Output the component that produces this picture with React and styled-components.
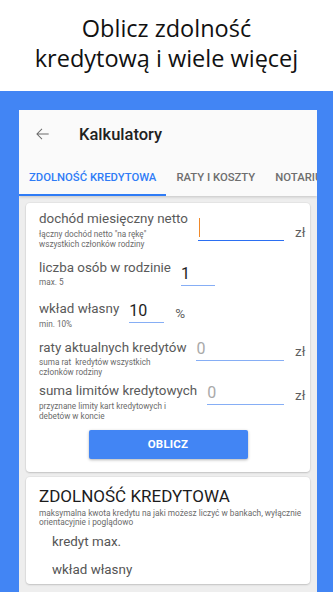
import React from 'react'
import styled, { createGlobalStyle } from 'styled-components'

const GlobalStyle = createGlobalStyle`
    html, body {
        margin: 0;
        padding: 0;
        background: #ffffff;
    }
    body {
        font-family: Roboto, "Liberation Sans", sans-serif;
    }
`

const rows = [
    {
        label: 'dochód miesięczny netto',
        hint: 'łączny dochód netto "na rękę" wszystkich członków rodziny',
        value: '',
        unit: 'zł',
        grow: true,
        focused: true,
        space: 0,
        drop: 7,
    },
    {
        label: 'liczba osób w rodzinie',
        hint: 'max. 5',
        value: '1',
        width: 34,
        space: 11,
        drop: 3,
    },
    {
        label: 'wkład własny',
        hint: 'min. 10%',
        value: '10',
        unit: '%',
        width: 35,
        space: 14,
        drop: -1.5,
    },
    {
        label: 'raty aktualnych kredytów',
        hint: 'suma rat\u00a0 kredytów wszystkich członków rodziny',
        placeholder: '0',
        unit: 'zł',
        grow: true,
        space: 11,
        drop: -2,
    },
    {
        label: 'suma limitów kredytowych',
        hint: 'przyznane limity kart kredytowych i debetów w koncie',
        placeholder: '0',
        unit: 'zł',
        grow: true,
        space: 6,
        drop: -1.5,
    },
]

function BackArrow() {
    return (
        <svg width="20" height="20" viewBox="0 0 24 24">
            <path
                fill="#6a6a6a"
                d="M20 11.3H7.3l5.1-5.1-.8-.8L5.1 12l6.5 6.6.8-.8-5.1-5.1H20z"
            />
        </svg>
    )
}

export default function App() {
    return (
        <Page>
            <GlobalStyle />
            <Headline>
                Oblicz zdolność
                <br />
                kredytową i wiele więcej
            </Headline>

            <Frame>
                <Screen>
                    <AppBar>
                        <Toolbar>
                            <IconButton>
                                <BackArrow />
                            </IconButton>
                            <Title>Kalkulatory</Title>
                        </Toolbar>
                        <Tabs>
                            <Tab $active>ZDOLNOŚĆ KREDYTOWA</Tab>
                            <Tab>RATY I KOSZTY</Tab>
                            <Tab>NOTARIUSZ</Tab>
                        </Tabs>
                    </AppBar>

                    <Content>
                        <Card>
                            {rows.map((row) => (
                                <Row key={row.label} $space={row.space}>
                                    <LabelBlock>
                                        <Label>{row.label}</Label>
                                        <Hint>{row.hint}</Hint>
                                    </LabelBlock>
                                    <FieldWrap $grow={row.grow} $drop={row.drop}>
                                        <Field
                                            $grow={row.grow}
                                            $width={row.width}
                                            $focused={row.focused}
                                        >
                                            {row.focused && <Caret />}
                                            {row.value ? (
                                                <Value>{row.value}</Value>
                                            ) : (
                                                <Placeholder>{row.placeholder}</Placeholder>
                                            )}
                                        </Field>
                                        {row.unit && <Unit>{row.unit}</Unit>}
                                    </FieldWrap>
                                </Row>
                            ))}
                            <Submit>OBLICZ</Submit>
                        </Card>

                        <Card $result>
                            <ResultTitle>ZDOLNOŚĆ KREDYTOWA</ResultTitle>
                            <ResultHint>
                                maksymalna kwota kredytu na jaki możesz liczyć w bankach, wyłącznie
                                orientacyjnie i poglądowo
                            </ResultHint>
                            <ResultItem>kredyt max.</ResultItem>
                            <ResultItem>wkład własny</ResultItem>
                        </Card>
                    </Content>
                </Screen>
            </Frame>
        </Page>
    )
}

const Page = styled.div`
    width: 333px;
    height: 592px;
    overflow: hidden;
    display: flex;
    flex-direction: column;
    background: #ffffff;
`

const Headline = styled.div`
    height: 91px;
    flex: none;
    box-sizing: border-box;
    padding-top: 13px;
    text-align: center;
    font-family: "Open Sans", "Liberation Sans", sans-serif;
    font-size: 23.5px;
    line-height: 30px;
    color: #111111;
`

const Frame = styled.div`
    flex: 1;
    min-height: 0;
    background: #4285f4;
    padding: 19px 16px 0 19px;
    display: flex;
`

const Screen = styled.div`
    flex: 1;
    display: flex;
    flex-direction: column;
    background: #eeeeee;
    overflow: hidden;
`

const AppBar = styled.div`
    background: #fafafa;
    box-shadow: 0 1px 3px rgba(0, 0, 0, 0.18);
    position: relative;
    z-index: 1;
`

const Toolbar = styled.div`
    height: 48px;
    display: flex;
    align-items: center;
    padding-left: 13px;
`

const IconButton = styled.div`
    width: 20px;
    height: 20px;
    display: flex;
    margin-top: -1px;
`

const Title = styled.div`
    margin-left: 27px;
    font-size: 16.5px;
    font-weight: 500;
    color: #212121;
`

const Tabs = styled.div`
    display: flex;
    height: 38px;
    overflow: hidden;
`

const Tab = styled.div`
    flex: none;
    padding: 0 10px;
    display: flex;
    align-items: center;
    white-space: nowrap;
    font-size: 11.3px;
    font-weight: 500;
    color: ${(p) => (p.$active ? '#2f7cf6' : '#6e6e6e')};
    box-shadow: ${(p) => (p.$active ? 'inset 0 -2px 0 #2f7cf6' : 'none')};
`

const Content = styled.div`
    flex: 1;
    padding: 7px 7px 0;
    display: flex;
    flex-direction: column;
    gap: 5px;
`

const Card = styled.div`
    background: #ffffff;
    border-radius: 4px;
    box-shadow: 0 1px 2px rgba(0, 0, 0, 0.16), 0 0 0 1px rgba(0, 0, 0, 0.03);
    padding: ${(p) => (p.$result ? '9px 8px 0 13px' : '8.4px 5px 13px 13px')};
    display: flex;
    flex-direction: column;
    flex: none;
`

const Row = styled.div`
    display: flex;
    align-items: flex-start;
    margin-top: ${(p) => p.$space}px;
`

const LabelBlock = styled.div`
    flex: none;
    width: min-content;
    display: flex;
    flex-direction: column;
`

const Label = styled.div`
    white-space: nowrap;
    font-size: 13.4px;
    line-height: 16px;
    color: #5a5a5a;
`

const Hint = styled.div`
    margin-top: 1.5px;
    font-size: 8.2px;
    line-height: 10px;
    color: #6a6a6a;
`

const FieldWrap = styled.div`
    display: flex;
    align-items: flex-end;
    margin-left: 10px;
    margin-top: ${(p) => p.$drop}px;
    flex: ${(p) => (p.$grow ? 1 : 'none')};
    min-width: 0;
`

const Field = styled.div`
    position: relative;
    height: 22px;
    display: flex;
    align-items: center;
    border-bottom: 1.5px solid ${(p) => (p.$focused ? '#2b6ff2' : '#86aef5')};
    flex: ${(p) => (p.$grow ? 1 : 'none')};
    width: ${(p) => (p.$width ? `${p.$width}px` : 'auto')};
    font-size: 16px;
    line-height: 22px;
`

const Caret = styled.span`
    position: absolute;
    left: 1px;
    top: 0;
    width: 1.5px;
    height: 19px;
    background: #f0892a;
`

const Value = styled.span`
    color: #1e1e1e;
`

const Placeholder = styled.span`
    color: #a9a9a9;
`

const Unit = styled.span`
    margin-left: 11px;
    padding-bottom: 2.5px;
    font-size: 13.5px;
    line-height: 14px;
    color: #5e5e5e;
    width: 10px;
`

const Submit = styled.button`
    align-self: center;
    margin: 9px 0 0 -8px;
    width: 159px;
    height: 29px;
    border: none;
    border-radius: 2px;
    background: #4285f4;
    box-shadow: 0 1px 3px rgba(0, 0, 0, 0.3);
    color: #ffffff;
    font-family: Roboto, "Liberation Sans", sans-serif;
    font-size: 11.5px;
    font-weight: 700;
    letter-spacing: 0.2px;
`

const ResultTitle = styled.div`
    font-size: 17px;
    line-height: 20px;
    color: #1c1c1c;
`

const ResultHint = styled.div`
    margin-top: 3px;
    font-size: 8.3px;
    line-height: 9.5px;
    color: #6a6a6a;
`

const ResultItem = styled.div`
    padding-left: 13px;
    font-size: 13.4px;
    line-height: 28px;
    color: #555555;
    &:first-of-type {
        margin-top: 7px;
    }
`
